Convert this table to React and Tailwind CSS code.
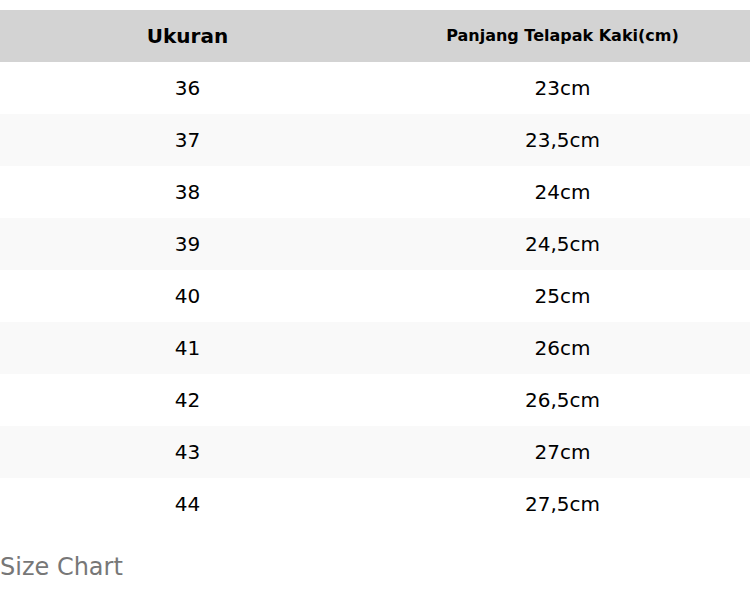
const rows = [
  ["36", "23cm"],
  ["37", "23,5cm"],
  ["38", "24cm"],
  ["39", "24,5cm"],
  ["40", "25cm"],
  ["41", "26cm"],
  ["42", "26,5cm"],
  ["43", "27cm"],
  ["44", "27,5cm"],
];

export default function App() {
  return (
    <div className="w-[750px] bg-white pt-[10px] font-['DejaVu_Sans',sans-serif] text-black">
      <table className="w-full table-fixed border-collapse caption-bottom">
        <caption className="pt-[23px] text-left text-[24px] leading-[28px] text-[#777777]">
          Size Chart
        </caption>
        <thead>
          <tr className="h-[52px] bg-[#d3d3d3]">
            <th className="w-1/2 text-center text-[20px] font-bold">Ukuran</th>
            <th className="w-1/2 text-center text-[16px] font-bold">
              Panjang Telapak Kaki(cm)
            </th>
          </tr>
        </thead>
        <tbody>
          {rows.map(([size, len], i) => (
            <tr
              key={size}
              className={i % 2 === 1 ? "h-[52px] bg-[#f9f9f9]" : "h-[52px] bg-white"}
            >
              <td className="text-center text-[20px]">{size}</td>
              <td className="text-center text-[20px]">{len}</td>
            </tr>
          ))}
        </tbody>
      </table>
    </div>
  );
}
